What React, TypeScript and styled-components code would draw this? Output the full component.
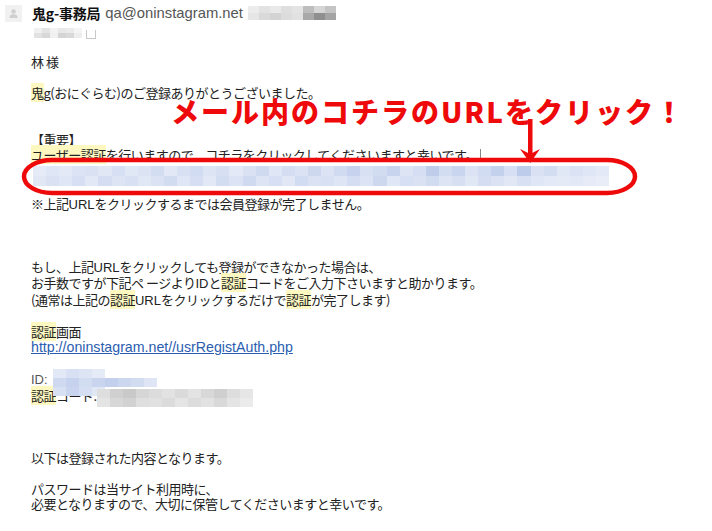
import React from "react";
import styled, { createGlobalStyle } from "styled-components";

const GlobalStyle = createGlobalStyle`
  html, body { margin: 0; padding: 0; background: #ffffff; }
  body { font-family: "Noto Sans CJK JP", "Liberation Sans", sans-serif; }
`;

const Page = styled.div`
  position: relative;
  width: 712px;
  height: 531px;
  overflow: hidden;
  background: #fff;
`;

const Header = styled.div`
  display: flex;
  align-items: center;
  height: 18px;
  padding: 4px 0 0 5px;
`;

const Avatar = styled.div`
  width: 17px;
  height: 17px;
  background: #f1f1f1;
  display: flex;
  align-items: center;
  justify-content: center;
  margin-right: 10px;
`;

const SenderName = styled.span`
  font-family: "Noto Sans CJK JP", sans-serif;
  font-weight: 700;
  font-size: 14px;
  color: #111;
  letter-spacing: -0.2px;
  margin-right: 5px;
`;

const Email = styled.span`
  font-family: "Liberation Sans", Arial, sans-serif;
  font-size: 14.8px;
  color: #555;
  margin-right: 5px;
`;

const SubHeader = styled.div`
  display: flex;
  align-items: center;
  height: 12px;
  margin: 5px 0 0 34px;
  gap: 2px;
`;

const SmallBox = styled.div`
  width: 8px;
  height: 8px;
  border: 1px solid #c8c8c8;
  border-top: none;
  margin-left: 2px;
  margin-top: 3px;
`;

const Mosaic = styled.div<{ $cols: number; $w: number; $h: number }>`
  display: inline-grid;
  grid-template-columns: repeat(${(p) => p.$cols}, ${(p) => p.$w}px);
  grid-auto-rows: ${(p) => p.$h}px;
  vertical-align: middle;
`;

const Cell = styled.div<{ $c: string }>`
  background: ${(p) => p.$c};
`;

const Body = styled.div`
  padding-left: 31px;
  margin-top: 15px;
  font-size: 13px;
  line-height: 15.5px;
  letter-spacing: -0.5px;
  color: #222;
`;

const Line = styled.div<{ $gap?: number }>`
  margin-top: ${(p) => (p.$gap ?? 0) * 15.5}px;
  white-space: nowrap;
`;

const Mark = styled.span`
  background: #fdf8c0;
`;

const Caret = styled.span`
  display: inline-block;
  width: 1px;
  height: 12px;
  background: #888;
  margin-left: 2px;
  vertical-align: -1px;
`;

const UrlBand = styled.div`
  margin: 3px 0 10px 2px;
`;

const Latin = styled.span<{ $muted?: boolean }>`
  font-family: "Liberation Sans", Arial, sans-serif;
  letter-spacing: 0;
  color: ${(p) => (p.$muted ? "#555" : "inherit")};
`;

const Link = styled.a`
  font-family: "Liberation Sans", Arial, sans-serif;
  font-size: 14.2px;
  letter-spacing: 0;
  color: #2a5db0;
  text-decoration: underline;
`;

const IdBlock = styled.div`
  position: relative;
  margin-top: 15.5px;
`;

const Redact = styled.div<{ $left: number; $top: number }>`
  position: absolute;
  left: ${(p) => p.$left}px;
  top: ${(p) => p.$top}px;
`;

const Callout = styled.div`
  position: absolute;
  left: 171px;
  top: 97px;
  font-family: "Noto Sans CJK JP", sans-serif;
  font-weight: 900;
  font-size: 28px;
  line-height: 1;
  letter-spacing: 2px;
  color: #ee0a0a;
  white-space: nowrap;
`;

const Overlay = styled.svg<{ $left: number; $top: number }>`
  position: absolute;
  left: ${(p) => p.$left}px;
  top: ${(p) => p.$top}px;
  overflow: visible;
`;

type MosaicProps = { cols: number; w: number; h: number; cells: string[] };
const Pix: React.FC<MosaicProps> = ({ cols, w, h, cells }) => (
  <Mosaic $cols={cols} $w={w} $h={h}>
    {cells.map((c, i) => (
      <Cell key={i} $c={c} />
    ))}
  </Mosaic>
);

const T = "transparent";

const headerCells = [
  "#ececec", "#e2e2e2", "#e9e9e9", "#dedede", "#e4e4e4", "#bdbdbd", "#d6d6d6", "#c4c4c4",
  "#e6e6e6", "#d9d9d9", "#d3d3d3", "#dcdcdc", "#e1e1e1", "#a9a9a9", "#8f8f8f", "#a4a4a4",
];

const subCells = [
  "#f0f0f0", "#e4e4e4", "#f2f2f2", "#e8e8e8", "#ebebeb", "#f4f4f4",
  "#e2e2e2", "#d8d8d8", "#f0f0f0", "#d4d4d4", "#d9d9d9", "#eeeeee",
];

const urlTop = [
  "#e6ebf7", "#dfe6f5", "#e3e9f6", "#dbe3f4", "#d9e1f3", "#e1e7f5", "#d6dff3", "#e0e7f5",
  "#dce4f4", "#d3ddf2", "#e2e8f6", "#d8e0f3", "#d1dbf1", "#dde4f4", "#d7e0f3", "#e3e9f6",
  "#d9e1f3", "#cfd9f0", "#dfe6f5", "#d4ddf2", "#dae2f4", "#cdd8ef", "#dbe3f4", "#d0daf1",
  "#c7d3ee", "#d8e0f3", "#d2dcf1", "#c8d4ee", "#dde4f4", "#d5def2", "#bfcdeb", "#d3ddf2",
  "#c9d5ee", "#dbe3f4", "#d1dbf1", "#c4d1ed", "#d6dff3", "#bcccea", "#d9e1f3", "#d3ddf2",
  "#e0e7f5", "#dae2f4", "#dfe6f5", "#e3e9f6",
];
const urlBottom = [
  "#e1e7f5", "#d9e1f3", "#dfe6f5", "#d6dff3", "#e2e8f6", "#d4ddf2", "#dde4f4", "#d8e0f3",
  "#e0e7f5", "#dae2f4", "#d2dcf1", "#dfe6f5", "#d5def2", "#e2e8f6", "#d3ddf2", "#dbe3f4",
  "#cfd9f0", "#dde4f4", "#d6dff3", "#e1e7f5", "#d1dbf1", "#dae2f4", "#d8e0f3", "#dee5f5",
  "#d4ddf2", "#dbe3f4", "#cdd8ef", "#dfe6f5", "#d6dff3", "#d9e1f3", "#d2dcf1", "#dde4f4",
  "#d7e0f3", "#e0e7f5", "#d4ddf2", "#dae2f4", "#e1e7f5", "#d8e0f3", "#dfe6f5", "#e3e9f6",
  "#e5eaf7", "#e2e8f6", "#e6ebf7", "#e8edf8",
];

const idCells = [
  "#e2e8f6", "#d8e0f3", "#dde4f4", "#e5eaf7", T, T, T, T,
  "#cfd9f0", "#c6d2ee", "#d3ddf2", "#c9d5ef", "#c3d0ed", "#cbd6ef", "#d2dcf1", "#dfe5f5",
  "#d8e0f3", "#c9d5ee", "#d5def2", "#e0e7f5", T, T, T, T,
];

const codeCells = [
  "#dedede", "#d0d0d0", "#c9c9c9", "#d6d6d6", "#dcdcdc", "#e2e2e2", "#dadada", "#e3e3e3", "#d8d8d8", "#cfcfcf", "#dddddd", "#e6e6e6",
  "#e4e4e4", "#d7d7d7", "#d2d2d2", "#dfdfdf", "#e1e1e1", "#dbdbdb", "#e5e5e5", "#dcdcdc", "#e2e2e2", "#d9d9d9", "#e4e4e4", "#ebebeb",
];

export default function App() {
  return (
    <Page>
      <GlobalStyle />
      <Header>
        <Avatar>
          <svg width="11" height="11" viewBox="0 0 11 11">
            <circle cx="5.5" cy="3.5" r="2.2" fill="#cfcfcf" />
            <path d="M1.5 10 C1.5 7 3.2 6.3 5.5 6.3 C7.8 6.3 9.5 7 9.5 10 Z" fill="#cfcfcf" />
          </svg>
        </Avatar>
        <SenderName>鬼g-事務局</SenderName>
        <Email>qa@oninstagram.net</Email>
        <Pix cols={8} w={11} h={7} cells={headerCells} />
      </Header>
      <SubHeader>
        <Pix cols={6} w={8} h={5} cells={subCells} />
        <SmallBox />
      </SubHeader>
      <Body>
        <Line>林 様</Line>
        <Line $gap={1}>
          <Mark>鬼</Mark>g(おにぐらむ)のご登録ありがとうございました。
        </Line>
        <Line $gap={2}>【重要】</Line>
        <Line>
          <Mark>ユーザー認証</Mark>を行いますので、コチラをクリックしてくださいますと幸いです。
          <Caret />
        </Line>
        <UrlBand>
          <Pix cols={44} w={13.1} h={10} cells={[...urlTop, ...urlBottom]} />
        </UrlBand>
        <Line>
          ※上記<Latin>URL</Latin>をクリックするまでは会員登録が完了しません。
        </Line>
        <Line $gap={3}>
          もし、上記<Latin>URL</Latin>をクリックしても登録ができなかった場合は、
        </Line>
        <Line>
          お手数ですが下記ペ ージより<Latin>ID</Latin>と<Mark>認証</Mark>コードをご入力下さいますと助かります。
        </Line>
        <Line>
          (通常は上記の<Mark>認証</Mark><Latin>URL</Latin>をクリックするだけで<Mark>認証</Mark>が完了します)
        </Line>
        <Line $gap={1}>
          <Mark>認証</Mark>画面
        </Line>
        <Line>
          <Link href="#">http://oninstagram.net//usrRegistAuth.php</Link>
        </Line>
        <IdBlock>
          <Line>
            <Latin $muted>ID:</Latin>
          </Line>
          <Line>
            <Mark>認証</Mark>コード:
          </Line>
          <Redact $left={22} $top={-2}>
            <Pix cols={8} w={13} h={9} cells={idCells} />
          </Redact>
          <Redact $left={66} $top={18}>
            <Pix cols={12} w={13} h={9} cells={codeCells} />
          </Redact>
        </IdBlock>
        <Line $gap={3}>以下は登録された内容となります。</Line>
        <Line $gap={1}>パスワードは当サイト利用時に、</Line>
        <Line>必要となりますので、大切に保管してくださいますと幸いです。</Line>
      </Body>

      <Callout>メール内のコチラのURLをクリック！</Callout>
      <Overlay $left={516} $top={119} width="28" height="46" viewBox="0 0 28 46">
        <rect x="12" y="0" width="4.5" height="36" fill="#ee0a0a" />
        <path d="M4 30 L14.2 44 L24 30 L14.2 35 Z" fill="#ee0a0a" />
      </Overlay>
      <Overlay $left={21} $top={157} width="618" height="39" viewBox="0 0 618 39">
        <rect x="3" y="3" width="611" height="33" rx="28" ry="16.5" fill="none" stroke="#ee0a0a" strokeWidth="4.5" />
      </Overlay>
    </Page>
  );
}
